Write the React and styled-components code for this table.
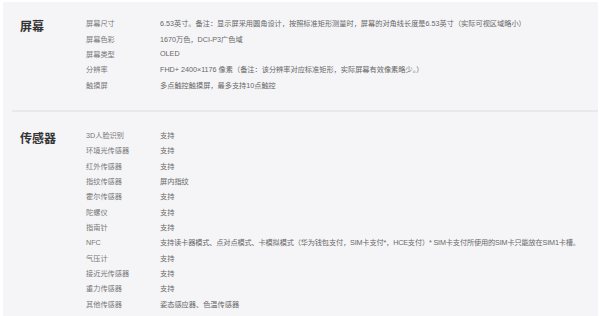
import styled, { createGlobalStyle } from 'styled-components';

const GlobalStyle = createGlobalStyle`
	html, body {
		margin: 0;
		padding: 0;
		background: #ffffff;
	}
	body {
		font-family: "Liberation Sans", "Noto Sans CJK SC", sans-serif;
	}
`;

const specs = [
	{
		title: '屏幕',
		rows: [
			['屏幕尺寸', '6.53英寸。备注：显示屏采用圆角设计，按照标准矩形测量时，屏幕的对角线长度是6.53英寸（实际可视区域略小）'],
			['屏幕色彩', '1670万色，DCI-P3广色域'],
			['屏幕类型', 'OLED'],
			['分辨率', 'FHD+ 2400×1176 像素（备注：该分辨率对应标准矩形，实际屏幕有效像素略少。）'],
			['触摸屏', '多点触控触摸屏，最多支持10点触控'],
		],
	},
	{
		title: '传感器',
		rows: [
			['3D人脸识别', '支持'],
			['环境光传感器', '支持'],
			['红外传感器', '支持'],
			['指纹传感器', '屏内指纹'],
			['霍尔传感器', '支持'],
			['陀螺仪', '支持'],
			['指南针', '支持'],
			['NFC', '支持读卡器模式、点对点模式、卡模拟模式（华为钱包支付，SIM卡支付*，HCE支付）* SIM卡支付所使用的SIM卡只能放在SIM1卡槽。'],
			['气压计', '支持'],
			['接近光传感器', '支持'],
			['重力传感器', '支持'],
			['其他传感器', '姿态感应器、色温传感器'],
		],
	},
];

const Panel = styled.div`
	margin: 2px 2px 0 3px;
	height: 314px;
	overflow: hidden;
	background: #f5f5f7;
	padding-left: 9px;
`;

const Section = styled.section`
	display: flex;
	padding: ${(p) => (p.$first ? '13.5px 0 18px 8px' : '15px 0 14px 8px')};
	border-bottom: ${(p) => (p.$first ? '2px solid #e9e9ec' : 'none')};
`;

const Title = styled.h2`
	width: 66px;
	flex-shrink: 0;
	margin: ${(p) => (p.$first ? '4px 0 0' : '5px 0 0')};
	font-size: 12px;
	line-height: 15px;
	font-weight: bold;
	color: #333333;
`;

const Table = styled.div`
	display: grid;
	grid-template-columns: 74px 1fr;
	grid-auto-rows: 15.35px;
	align-items: center;
	font-size: 7.2px;
	white-space: nowrap;
`;

const Label = styled.div`
	color: #777777;
`;

const Value = styled.div`
	color: #666666;
	letter-spacing: ${(p) => (p.$tight ? '-0.15px' : '0')};
`;

export default function App() {
	return (
		<>
			<GlobalStyle />
			<Panel>
				{specs.map((group, i) => (
					<Section key={group.title} $first={i === 0}>
						<Title $first={i === 0}>{group.title}</Title>
						<Table>
							{group.rows.map(([label, value]) => [
								<Label key={label + '-l'}>{label}</Label>,
								<Value key={label + '-v'} $tight={value.length > 60}>
									{value}
								</Value>,
							])}
						</Table>
					</Section>
				))}
			</Panel>
		</>
	);
}
